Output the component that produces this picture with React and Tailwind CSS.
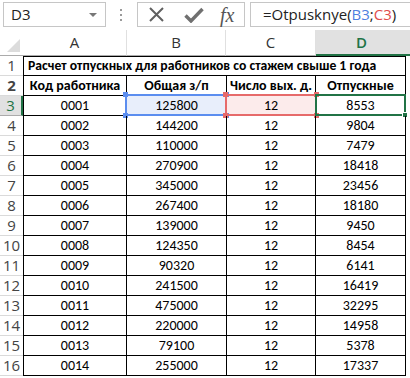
import React from 'react';

const rows = [
  ['0001', '125800', '12', '8553'],
  ['0002', '144200', '12', '9804'],
  ['0003', '110000', '12', '7479'],
  ['0004', '270900', '12', '18418'],
  ['0005', '345000', '12', '23456'],
  ['0006', '267400', '12', '18180'],
  ['0007', '139000', '12', '9450'],
  ['0008', '124350', '12', '8454'],
  ['0009', '90320', '12', '6141'],
  ['0010', '241500', '12', '16419'],
  ['0011', '475000', '12', '32295'],
  ['0012', '220000', '12', '14958'],
  ['0013', '79100', '12', '5378'],
  ['0014', '255000', '12', '17337'],
];

const cellFont = { fontFamily: 'Carlito, "Open Sans", "Liberation Sans", sans-serif' };

function FormulaBar() {
  return (
    <div className="flex h-[30px] items-start bg-white pt-[2px] text-[#222]">
      {/* name box */}
      <div className="ml-[3px] flex h-[25px] w-[103px] items-center justify-between border border-[#c6c6c6] pl-[7px] pr-[8px]">
        <span className="text-[15px]" style={{ fontFamily: '"Open Sans", sans-serif' }}>D3</span>
        <span className="h-0 w-0 border-x-[4px] border-t-[4px] border-x-transparent border-t-[#777]" />
      </div>
      {/* grip dots */}
      <div className="ml-[13px] flex h-[25px] w-[4px] flex-col items-center justify-center gap-[3px]">
        <span className="h-[2px] w-[2px] bg-[#9a9a9a]" />
        <span className="h-[2px] w-[2px] bg-[#9a9a9a]" />
        <span className="h-[2px] w-[2px] bg-[#9a9a9a]" />
      </div>
      {/* cancel / enter / fx */}
      <div className="ml-[14px] flex h-[25px] w-[108px] items-center border border-[#c6c6c6]">
        <svg width="15" height="15" viewBox="0 0 15 15" className="ml-[11px]">
          <path d="M1 1 L14 14 M14 1 L1 14" stroke="#606060" strokeWidth="2" fill="none" />
        </svg>
        <svg width="20" height="16" viewBox="0 0 20 16" className="ml-[20px]">
          <path d="M1.5 8.5 L7 14 L18.5 2" stroke="#707070" strokeWidth="3.4" fill="none" strokeLinejoin="miter" />
        </svg>
        <span
          className="ml-[16px] text-[20px] italic leading-none text-[#555]"
          style={{ fontFamily: '"Liberation Serif", serif' }}
        >
          fx
        </span>
      </div>
      {/* formula input */}
      <div
        className="ml-[5px] flex h-[25px] flex-1 items-center border border-r-0 border-[#c6c6c6] pl-[12px] text-[15px]"
        style={{ fontFamily: '"Open Sans", sans-serif' }}
      >
        <span>=Otpusknye(</span>
        <span className="text-[#4f7fe0]">B3</span>
        <span>;</span>
        <span className="text-[#e04c4c]">C3</span>
        <span>)</span>
      </div>
    </div>
  );
}

function ColumnHeaders() {
  const cols = [
    { l: 'A', w: 'w-[104px]' },
    { l: 'B', w: 'w-[99px]' },
    { l: 'C', w: 'w-[90px]' },
  ];
  return (
    <div className="flex h-[26px] text-[15px] text-[#333]" style={{ fontFamily: '"Open Sans", sans-serif' }}>
      <div className="relative w-[23px] border-b border-[#ababab]">
        <span className="absolute bottom-[3px] right-[3px] h-0 w-0 border-b-[13px] border-l-[13px] border-b-[#dcdcdc] border-l-transparent" />
      </div>
      {cols.map((c) => (
        <div
          key={c.l}
          className={`${c.w} flex items-center justify-center border-b border-r border-b-[#ababab] border-r-[#e0e0e0]`}
        >
          {c.l}
        </div>
      ))}
      <div className="flex flex-1 items-center justify-center border-b-2 border-[#217346] bg-[#e1e1e1] pr-[3px] font-semibold text-[#217346]">
        D
      </div>
    </div>
  );
}

function RowHead({ n, active }) {
  return (
    <div
      className={`flex w-[23px] items-center justify-center border-b text-[15px] ${
        active
          ? 'border-b-[#ababab] bg-[#e1e1e1] text-[#217346] border-r-2 border-r-[#217346]'
          : 'border-b-[#dadada] text-[#444]'
      }`}
      style={{ fontFamily: '"Open Sans", sans-serif' }}
    >
      {n}
    </div>
  );
}

export default function App() {
  return (
    <div className="h-[378px] w-[410px] overflow-hidden bg-white">
      <FormulaBar />
      <ColumnHeaders />

      <div className="text-[14px] text-black" style={cellFont}>
        {/* row 1: title */}
        <div className="flex h-[20px]">
          <RowHead n={1} />
          <div className="flex w-[383px] items-center whitespace-nowrap border border-black pl-[4px] text-[13.7px] font-bold">
            Расчет отпускных для работников со стажем свыше 1 года
          </div>
        </div>

        {/* row 2: column titles */}
        <div className="flex h-[20px] font-bold">
          <RowHead n={2} />
          <div className="flex w-[104px] items-center justify-center border-x border-b border-black">Код работника</div>
          <div className="flex w-[100px] items-center justify-center border-r border-b border-black">Общая з/п</div>
          <div className="flex w-[89px] items-center justify-center whitespace-nowrap border-r border-b border-black">Число вых. д.</div>
          <div className="flex w-[90px] items-center justify-center border-r border-b border-black">Отпускные</div>
        </div>

        {rows.map((r, i) => {
          const n = i + 3;
          const first = i === 0;
          return (
            <div key={n} className="relative flex h-[20px]">
              <RowHead n={n} active={first} />
              <div className="flex w-[104px] items-center justify-center border-x border-b border-black">{r[0]}</div>
              <div className={`flex w-[100px] items-center justify-center border-r border-b border-black ${first ? 'bg-[#e8eefb]' : ''}`}>
                {r[1]}
              </div>
              <div className={`flex w-[89px] items-center justify-center border-r border-b border-black ${first ? 'bg-[#fcebeb]' : ''}`}>
                {r[2]}
              </div>
              <div className="flex w-[90px] items-center justify-center border-r border-b border-black">{r[3]}</div>

              {first && (
                <>
                  {/* B3 reference box */}
                  <div className="pointer-events-none absolute left-[125px] top-[-2px] h-[22px] w-[102px] border-2 border-[#5b8def]">
                    <span className="absolute left-[-4px] top-[-4px] h-[5px] w-[5px] bg-[#5b8def]" />
                    <span className="absolute right-[-4px] top-[-4px] h-[5px] w-[5px] bg-[#5b8def]" />
                    <span className="absolute bottom-[-4px] left-[-4px] h-[5px] w-[5px] bg-[#5b8def]" />
                    <span className="absolute bottom-[-4px] right-[-4px] h-[5px] w-[5px] bg-[#5b8def]" />
                  </div>
                  {/* C3 reference box */}
                  <div className="pointer-events-none absolute left-[225px] top-[-2px] h-[22px] w-[92px] border-2 border-[#e66a6a]">
                    <span className="absolute left-[-4px] top-[-4px] h-[5px] w-[5px] bg-[#e66a6a]" />
                    <span className="absolute right-[-4px] top-[-4px] h-[5px] w-[5px] bg-[#e66a6a]" />
                    <span className="absolute bottom-[-4px] left-[-4px] h-[5px] w-[5px] bg-[#e66a6a]" />
                    <span className="absolute bottom-[-4px] right-[-4px] h-[5px] w-[5px] bg-[#e66a6a]" />
                  </div>
                  {/* D3 active cell */}
                  <div className="pointer-events-none absolute left-[315px] top-[-2px] h-[22px] w-[91px] border-2 border-[#217346]">
                    <span className="absolute bottom-[-4px] right-[-4px] h-[6px] w-[6px] border border-white bg-[#217346]" />
                  </div>
                </>
              )}
            </div>
          );
        })}
      </div>
    </div>
  );
}
